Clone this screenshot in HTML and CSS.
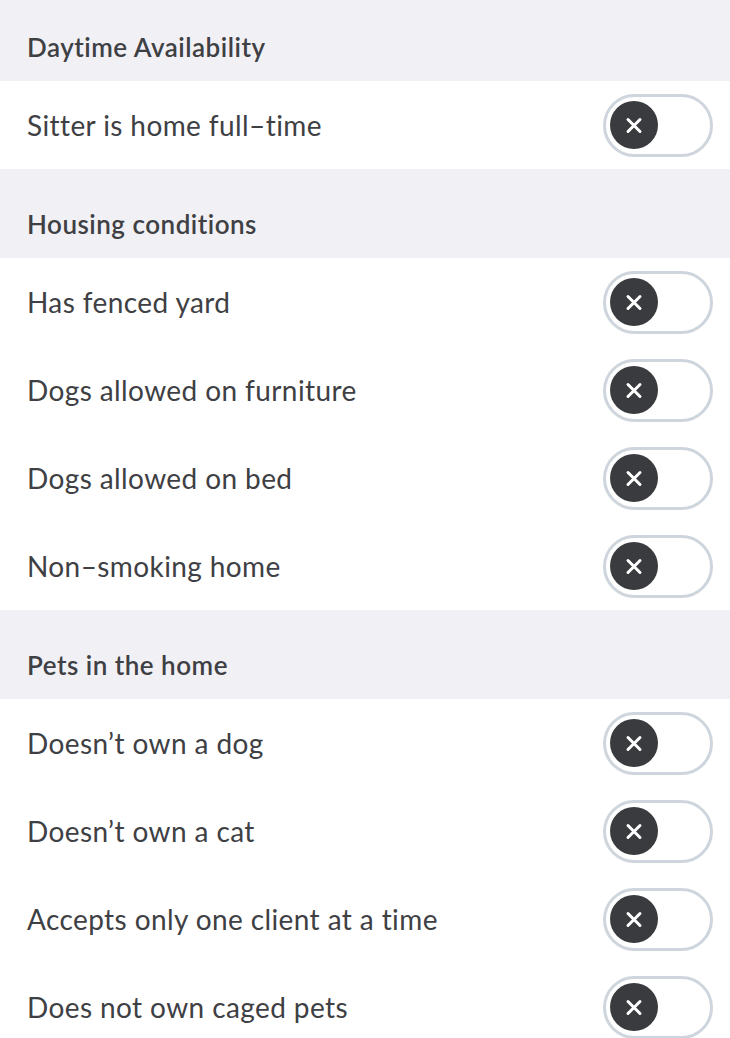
FILE: index.html
```html
<!DOCTYPE html>
<html lang="en">
<head>
    <meta charset="UTF-8">
    <meta name="viewport" content="width=device-width, initial-scale=1.0">
    <title>Sitter preferences</title>
    <link rel="stylesheet" href="styles.css">
</head>
<body>

    <div class="section">
        <div class="section-title first">Daytime Availability</div>
        <div class="row">
            <span>Sitter is home full–time</span>
            <div class="toggle"><span class="knob"></span></div>
        </div>
    </div>

    <div class="section">
        <div class="section-title">Housing conditions</div>
        <div class="row">
            <span>Has fenced yard</span>
            <div class="toggle"><span class="knob"></span></div>
        </div>
        <div class="row">
            <span>Dogs allowed on furniture</span>
            <div class="toggle"><span class="knob"></span></div>
        </div>
        <div class="row">
            <span>Dogs allowed on bed</span>
            <div class="toggle"><span class="knob"></span></div>
        </div>
        <div class="row">
            <span>Non–smoking home</span>
            <div class="toggle"><span class="knob"></span></div>
        </div>
    </div>

    <div class="section">
        <div class="section-title">Pets in the home</div>
        <div class="row">
            <span>Doesn’t own a dog</span>
            <div class="toggle"><span class="knob"></span></div>
        </div>
        <div class="row">
            <span>Doesn’t own a cat</span>
            <div class="toggle"><span class="knob"></span></div>
        </div>
        <div class="row">
            <span>Accepts only one client at a time</span>
            <div class="toggle"><span class="knob"></span></div>
        </div>
        <div class="row">
            <span>Does not own caged pets</span>
            <div class="toggle"><span class="knob"></span></div>
        </div>
    </div>

</body>
</html>
```

FILE: styles.css
```css
* {
    margin: 0;
    padding: 0;
    box-sizing: border-box;
}

body {
    background: #ffffff;
    color: #3e4044;
    font-family: Lato, "Noto Sans", sans-serif;
}

.section-title {
    height: 89px;
    background: #f1f0f5;
    padding: 0 27px 20px;
    display: flex;
    align-items: flex-end;
    font-size: 26px;
    font-weight: 600;
    letter-spacing: 0.5px;
    line-height: 28px;
}

.section-title.first {
    height: 81px;
}

.row {
    height: 88px;
    display: flex;
    align-items: center;
    justify-content: space-between;
    padding: 0 17px 0 27px;
    font-size: 28px;
    letter-spacing: 0.4px;
}

.toggle {
    width: 110px;
    height: 63px;
    border: 3px solid #cfd5dd;
    border-radius: 32px;
    display: flex;
    align-items: center;
    padding-left: 4px;
}

.knob {
    position: relative;
    width: 48px;
    height: 48px;
    border-radius: 50%;
    background: #3a3b3e;
}

.knob::before,
.knob::after {
    content: "";
    position: absolute;
    left: 14px;
    top: 22.5px;
    width: 20px;
    height: 3px;
    border-radius: 2px;
    background: #ffffff;
    transform: rotate(45deg);
}

.knob::after {
    transform: rotate(-45deg);
}
```
